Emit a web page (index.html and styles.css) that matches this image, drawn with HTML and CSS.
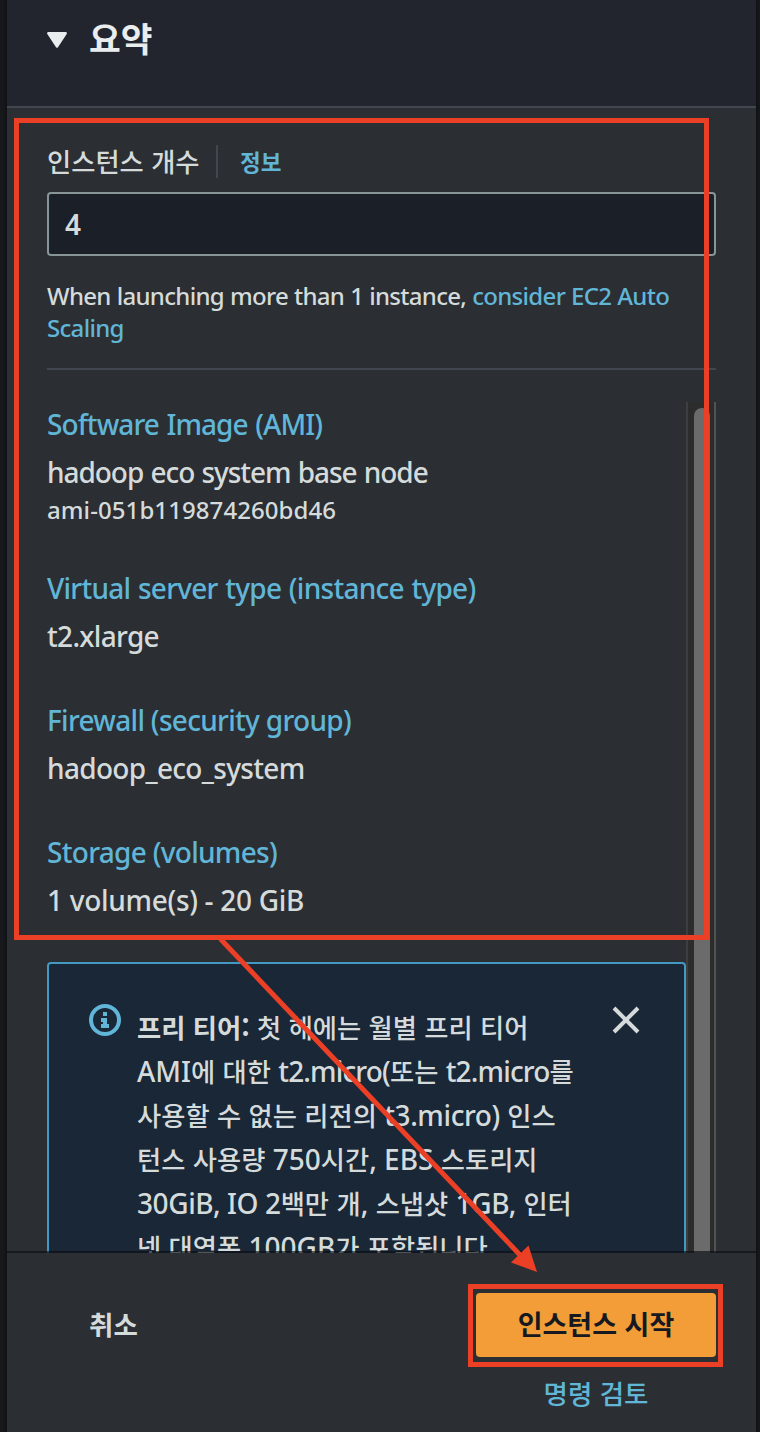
FILE: index.html
```html
<!DOCTYPE html>
<html lang="ko">
<head>
<meta charset="utf-8">
<title>요약</title>
<link rel="stylesheet" href="styles.css">
</head>
<body>
<main class="panel">
  <header class="head">
    <svg class="caret" width="20" height="16" viewBox="0 0 20 16"><path d="M1.3 1.3H18.7L10 14.5Z" fill="#eaeded" stroke="#eaeded" stroke-width="2.4" stroke-linejoin="round"/></svg>
    <h1 class="title">요약</h1>
  </header>
  <section class="count">
    <div class="count-label"><span class="label">인스턴스 개수</span><span class="rule"></span><a class="info">정보</a></div>
    <div class="field">4</div>
    <p class="hint"><span class="row">When launching more than 1 instance, <a class="link">consider EC2 Auto</a></span><span class="row"><a class="link">Scaling</a></span></p>
  </section>
  <section class="scroller">
    <div class="content">
      <div class="group"><a class="link name n1">Software Image (AMI)</a><div class="value v1">hadoop eco system base node</div><div class="sub">ami-051b119874260bd46</div></div>
      <div class="group"><a class="link name n2">Virtual server type (instance type)</a><div class="value">t2.xlarge</div></div>
      <div class="group"><a class="link name">Firewall (security group)</a><div class="value">hadoop_eco_system</div></div>
      <div class="group"><a class="link name">Storage (volumes)</a><div class="value v4">1 volume(s) - 20 GiB</div></div>
      <div class="alert">
        <svg class="alert-icon" width="32" height="32" viewBox="0 0 32 32"><circle cx="16" cy="16" r="14" fill="none" stroke="#61b6d7" stroke-width="4"/><path d="M14 8h4v4h-4zM12 14h6v6h2v4h-8v-4h2v-2h-2z" fill="#61b6d7"/></svg>
        <p class="alert-text">
          <span class="row"><b>프리 티어:</b> 첫 해에는 월별 프리 티어</span>
          <span class="row"><i>AMI</i>에 대한 <i class="tighter">t2.micro(</i>또는 <i class="tighter">t2.micro</i>를</span>
          <span class="row">사용할 수 없는 리전의 <i class="tight">t3.micro)</i> 인스</span>
          <span class="row">턴스 사용량 <i>750</i>시간<i>, EBS</i> 스토리지</span>
          <span class="row"><i class="tight">30GiB, IO 2</i>백만 개<i>,</i> 스냅샷 <i class="tight">1GB,</i> 인터</span>
          <span class="row">넷 대역폭 <i>100GB</i>가 포함됩니다</span>
        </p>
        <svg class="close" width="28" height="28" viewBox="0 0 28 28"><path d="M2 2L26 26M26 2L2 26" stroke="#d5dbdb" stroke-width="4"/></svg>
      </div>
    </div>
    <div class="track"><div class="thumb"></div></div>
  </section>
  <footer class="foot">
    <a class="cancel">취소</a>
    <div class="actions"><div class="launch">인스턴스 시작</div><a class="review">명령 검토</a></div>
  </footer>
</main>
<svg class="marks" width="760" height="1432" viewBox="0 0 760 1432">
  <g fill="none" stroke="#eb4026" stroke-width="5"><rect x="16.5" y="120.5" width="690" height="817"/><rect x="470.5" y="1286.500" width="250" height="78"/><path d="M220.500 939L521 1256"/></g>
  <path d="M537 1272L528.500 1245.500L511 1262.500Z" fill="#eb4026"/>
</svg>
</body>
</html>
```
FILE: styles.css
```css
* { box-sizing: border-box; }
body {
  margin: 0;
  height: 1432px;
  padding: 0 4px 0 7px;
  overflow: hidden;
  position: relative;
  background: #16181c;
  color: #d5dbdb;
  font-family: "Noto Sans", "Noto Sans CJK KR", sans-serif;
}
h1, p { margin: 0; }
i { font-style: normal; }
.panel { height: 1432px; display: flex; flex-direction: column; background: #2b2e33; box-shadow: 0 0 3px #08090b; }
.head { height: 108px; flex: none; display: flex; align-items: flex-start; padding: 0 0 0 40px; background: #22252e; border-bottom: 2px solid #414750; }
.caret { margin-top: 32px; }
.title { margin: 12px 0 0 22px; font: 700 34.500px/50px "Noto Sans CJK KR", sans-serif; color: #eaeded; }
.count { flex: none; height: 262px; margin: 0 40px; padding-top: 37px; border-bottom: 2px solid #414750; }
.count-label { display: flex; height: 33px; align-items: center; font-family: "Noto Sans CJK KR", sans-serif; white-space: nowrap; }
.label { width: 169px; font-size: 26.300px; font-weight: 500; line-height: 33px; margin-top: -3px; }
.rule { width: 2px; height: 33px; background: #414750; }
.info { margin-left: 22px; font-size: 22.500px; font-weight: 700; line-height: 33px; margin-top: -1px; color: #61b6d7; }
.field { height: 64px; margin-top: 14px; padding-left: 16px; border: 2px solid #879596; border-radius: 4px; background: #1a1f28; font-size: 28px; font-weight: 600; line-height: 61px; }
.hint { margin-top: 24px; font-size: 24px; line-height: 32px; font-weight: 550; letter-spacing: -.69px; word-spacing: .4px; }
.row { display: block; white-space: nowrap; }
.link { color: #61b6d7; }
.scroller { flex: none; display: flex; height: 851px; margin: 32px 40px 0; overflow: hidden; }
.content { width: 639px; }
.group { margin-bottom: 40px; font-size: 28px; font-weight: 500; line-height: 44px; white-space: nowrap; }
.name { display: block; width: max-content; margin-bottom: 4px; letter-spacing: -.7px; }
.n1 { letter-spacing: -.9px; word-spacing: 1px; }
.n2 { letter-spacing: -.73px; word-spacing: 1px; }
.value { width: max-content; letter-spacing: -.68px; }
.v1 { letter-spacing: -1.05px; word-spacing: 1px; }
.v4 { letter-spacing: -.3px; }
.sub { width: max-content; font-size: 24px; line-height: 32px; letter-spacing: .08px; }
.alert { display: flex; height: 340px; padding: 42px 0 0 40px; border: 2px solid #4399c1; border-radius: 4px; background: #192737; }
.alert-icon { flex: none; margin-top: -2px; }
.alert-text { flex: none; width: 459px; margin: -1px 0 0 16px; font: 500 26.300px/44px "Noto Sans CJK KR", sans-serif; }
.alert-text .row { height: 44px; }
.alert-text i { font: 500 28px/40px "Noto Sans", sans-serif; }
.alert-text .tight { letter-spacing: -.4px; }
.alert-text .tighter { letter-spacing: -.85px; }
.close { flex: none; margin: 0 0 0 16px; }
.track { width: 30px; padding: 6px 6px 0; background: #2c2c2c; border-left: 2px solid #3e3e3e; border-right: 2px solid #525252; }
.thumb { width: 16px; height: 860px; border-radius: 8px; background: #6b6b6b; }
.foot { position: relative; flex: 1; display: flex; justify-content: space-between; padding: 40px 40px 0 82px; background: #2b2e33; box-shadow: 0 -2px 0 rgba(10, 14, 18, .65); font-family: "Noto Sans CJK KR", sans-serif; font-size: 26.500px; }
.cancel { height: 64px; line-height: 61px; font-weight: 700; }
.actions { width: 240px; text-align: center; }
.launch { height: 64px; border-radius: 4px; background: #f29d38; color: #16191f; font-weight: 700; font-size: 27px; line-height: 61px; }
.review { display: block; margin-top: 19px; font-weight: 500; line-height: 34px; color: #61b6d7; }
.marks { position: absolute; left: 0; top: 0; }
```
